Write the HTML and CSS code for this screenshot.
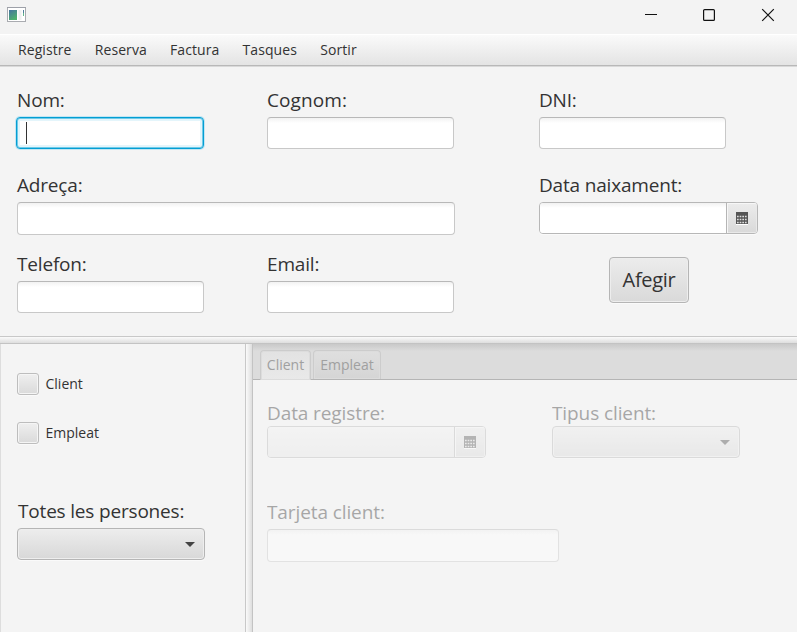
FILE: index.html
```html
<!DOCTYPE html>
<html lang="ca">
<head>
<meta charset="utf-8">
<title>Registre</title>
<link rel="stylesheet" href="styles.css">
</head>
<body>
<div class="window">
  <header class="titlebar">
    <svg class="app-icon" width="19" height="15" viewBox="0 0 19 15">
      <defs><linearGradient id="screen" x1="0" y1="0" x2="0.5" y2="1"><stop offset="0" stop-color="#4573a0"/><stop offset="1" stop-color="#4db06d"/></linearGradient></defs>
      <rect x="0.5" y="0.5" width="18" height="14" fill="#fff" stroke="#a9abb0"/>
      <path d="M0 .5h19" stroke="#9da0a8"/>
      <rect x="2" y="3" width="8" height="10" fill="url(#screen)"/>
      <rect x="11.500" y="3" width="3" height="10" fill="#eef0f0"/>
      <path d="M16.500 3v3" stroke="#4d7b9b"/><path d="M16.500 6v3" stroke="#61b68b"/>
    </svg>
    <svg class="controls" width="132" height="14" viewBox="0 0 132 14" fill="none" stroke="#111" stroke-width="1.2">
      <path d="M0 6.500h12" stroke-width="1"/>
      <rect x="58.600" y="1.600" width="10.800" height="10.800" rx="1"/>
      <path d="M117.200 1.200l11.600 11.600M128.800 1.200l-11.600 11.600"/>
    </svg>
  </header>
  <nav class="menubar">
    <span>Registre</span><span>Reserva</span><span>Factura</span><span>Tasques</span><span>Sortir</span>
  </nav>
  <main class="form">
    <div class="field"><label>Nom:</label><div class="input focused"><i class="caret"></i></div></div>
    <div class="field"><label class="loose">Cognom:</label><div class="input"></div></div>
    <div class="field"><label>DNI:</label><div class="input"></div></div>
    <div class="field wide"><label>Adreça:</label><div class="input tall"></div></div>
    <div class="field"><label>Data naixament:</label>
      <div class="date"><div class="input"></div><div class="date-button">
        <svg width="12" height="13" viewBox="0 0 12 13"><path d="M0 0h12v12H0z" fill="#555"/><path d="M1 4.500h10M1 7.500h10M1 10.500h10" stroke="#ddd" stroke-width="1.700" stroke-dasharray="1.700 .950"/><path d="M0 12.500h12" stroke="#fff"/></svg>
      </div></div>
    </div>
    <div class="field"><label>Telefon:</label><div class="input"></div></div>
    <div class="field"><label>Email:</label><div class="input"></div></div>
    <button class="button">Afegir</button>
  </main>
  <div class="divider-h"></div>
  <section class="lower">
    <aside class="side">
      <div class="check"><i class="box"></i><span>Client</span></div>
      <div class="check"><i class="box"></i><span>Empleat</span></div>
      <div class="field people"><label>Totes les persones:</label><div class="combo"><i class="arrow"></i></div></div>
    </aside>
    <div class="divider-v"></div>
    <div class="details">
      <div class="tabs"><div class="tab selected">Client</div><div class="tab">Empleat</div></div>
      <div class="tab-content">
        <div class="field near"><label>Data registre:</label>
          <div class="date disabled-date"><div class="input"></div><div class="date-button">
            <svg width="12" height="13" viewBox="0 0 12 13"><path d="M0 0h12v12H0z" fill="#555"/><path d="M1 4.500h10M1 7.500h10M1 10.500h10" stroke="#ddd" stroke-width="1.700" stroke-dasharray="1.700 .950"/><path d="M0 12.500h12" stroke="#fff"/></svg>
          </div></div>
        </div>
        <div class="field near"><label>Tipus client:</label><div class="combo"><i class="arrow"></i></div></div>
        <div class="field card"><label>Tarjeta client:</label><div class="input tall"></div></div>
      </div>
    </div>
  </section>
</div>
</body>
</html>
```
FILE: styles.css
```css
* { box-sizing: border-box; }
body { margin: 0; background: #f4f4f4; color: #333; font: 14.5px "Open Sans", "Noto Sans", sans-serif; }
.window { width: 797px; height: 632px; display: flex; flex-direction: column; overflow: hidden; }
.titlebar { height: 34px; flex: none; display: flex; justify-content: space-between; background: #f3f3f3; padding: 7px 20px 0 7px; }
.controls { margin-top: 1px; }
.menubar { height: 33px; flex: none; display: flex; gap: 23.2px; padding-left: 18px; line-height: 31px; border-bottom: 1px solid #d9d9d9; box-shadow: inset 0 -1px #b8b8b8, inset 0 1px #fff; background: linear-gradient(#fbfbfb, #e3e3e3); font-size: 14px; letter-spacing: .08px; }
.form { height: 269px; flex: none; padding: 19px 0 0 17px; display: grid; grid-template-columns: 250px 272px 1fr; grid-template-rows: 85px 79px 1fr; }
.field { display: flex; flex-direction: column; align-items: flex-start; gap: 3px; }
.field label { font-size: 19px; line-height: 28px; letter-spacing: -.18px; white-space: nowrap; }
.field .loose { letter-spacing: .1px; }
.wide { grid-column: span 2; }
.input { width: 187px; height: 32px; background: linear-gradient(#f2f2f2, #fff 5px); border: 1px solid #c8c8c8; border-top-color: #b8b8b8; border-radius: 4px; }
.input.tall { height: 33px; }
.wide .input { width: 438px; }
.input.focused { margin-left: -1px; width: 188px; border-color: #039ed3; background: #fff; box-shadow: 0 0 0 1px #c3e6f3, inset 0 0 0 1px #70cae8, inset 0 0 0 3px #e4f5fb; }
.caret { display: block; width: 1px; height: 22px; margin: 4px 0 0 9px; background: #333; }
.date { width: 219px; height: 32px; display: flex; border: 1px solid #b7b7b7; border-radius: 4px; overflow: hidden; box-shadow: 0 1px #fafafa; }
.date .input { width: 186px; height: 30px; border: 0; border-radius: 0; }
.date-button { flex: 1; border-left: 1px solid #b5b5b5; background: linear-gradient(#ececec, #d9d9d9); box-shadow: inset 1px 1px #f7f7f7, inset -1px -1px #e9e9e9; display: flex; align-items: center; justify-content: center; padding-right: 1px; }
.button { width: 80px; height: 46px; margin: 7px 0 0 70px; padding: 0 0 1px; color: #333; font: 20px "Open Sans", sans-serif; letter-spacing: -.3px; border: 1px solid #b5b5b5; border-radius: 4px; background: linear-gradient(#ececec, #d9d9d9); box-shadow: inset 0 0 0 1px #ededed, 0 1px #fafafa; }
.divider-h { height: 8px; flex: none; border-top: 1px solid #c8c8c8; border-bottom: 1px solid #c3c3c3; background: linear-gradient(#fafafa, #dedede); }
.lower { flex: 1; display: flex; }
.side { width: 245px; padding: 29px 0 0 16px; border-left: 1px solid #ddd; }
.check { display: flex; align-items: center; gap: 6.500px; height: 22px; margin-bottom: 27px; font-size: 14px; }
.check span { padding-bottom: 2px; }
.box { width: 22px; height: 22px; border: 1px solid #bdbdbd; border-radius: 3px; background: linear-gradient(#efefef, #dadada); box-shadow: inset 0 0 0 1px #f5f5f5, 0 1px #fafafa; }
.people { padding-top: 26px; margin-left: 1px; }
.people .combo { margin-left: -1px; }
.combo { width: 188px; height: 32px; display: flex; align-items: center; justify-content: flex-end; padding-right: 9px; border: 1px solid #b5b5b5; border-radius: 4px; background: linear-gradient(#ededed, #d8d8d8); box-shadow: inset 0 0 0 1px #eee, 0 1px #fafafa; }
.arrow { border: 5px solid transparent; border-top-color: #444; border-bottom: 0; }
.divider-v { width: 8px; border-left: 1px solid #c8c8c8; border-right: 1px solid #c3c3c3; background: linear-gradient(90deg, #fafafa, #dedede); }
.details { flex: 1; }
.tabs { height: 36px; padding: 6px 0 0 7px; display: flex; gap: 2px; background: linear-gradient(#c9c9c9, #dcdcdc 7px); border-bottom: 1px solid #b5b5b5; }
.tab { width: 68px; height: 29px; line-height: 28px; text-align: center; color: #a0a0a0; border: 1px solid #ccc; border-bottom: 0; border-radius: 4px 4px 0 0; background: linear-gradient(#dfdfdf, #d5d5d5); box-shadow: inset 0 0 0 1px #dcdcdc; font-size: 14px; }
.tab.selected { width: 51px; height: 30px; background: linear-gradient(#e2e2e2, #e9e9e9); }
.tab-content { padding: 19px 0 0 14px; display: grid; grid-template-columns: 285px 1fr; grid-template-rows: 99px auto; }
.tab-content .field > * { opacity: .4; }
.tab-content label { letter-spacing: -.1px; }
.near { gap: 0; }
.near > div { margin-top: -1px; }
.disabled-date .input { background: linear-gradient(#f4f4f4, #e8e8e8); }
.card .input { width: 292px; }
.card { grid-column: 1; }
```
